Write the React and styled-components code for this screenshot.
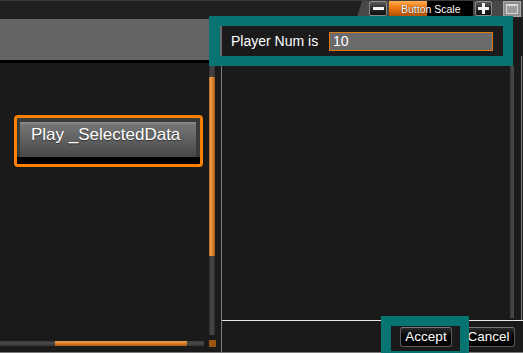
import React from 'react';
import styled, { createGlobalStyle } from 'styled-components';

const Global = createGlobalStyle`
  html, body { margin: 0; padding: 0; background: #1a1a1a; }
  body { font-family: "Liberation Sans", Arial, sans-serif; }
  * { box-sizing: border-box; }
`;

const TEAL = '#067470';
const ORANGE = '#ff8000';

const Screen = styled.div`
  position: relative;
  width: 523px;
  height: 353px;
  overflow: hidden;
  background: #1a1a1a;
  display: grid;
  grid-template-rows: 19px 1fr;
`;

const TopBar = styled.div`
  background: #202020;
  border-top: 1px solid #3a3a3a;
  display: flex;
  justify-content: flex-end;
  align-items: flex-start;
`;

const Tab = styled.div`
  width: 166px;
  height: 16px;
  background: #484848;
  clip-path: polygon(5px 0, 100% 0, 100% 100%, 0 100%);
  display: flex;
  align-items: flex-start;
  padding-left: 12px;
  gap: 2px;
`;

const IconBtn = styled.div`
  width: ${p => p.$w}px;
  height: 15px;
  border: 1px solid #8a8a8a;
  border-radius: 2px;
  background: linear-gradient(180deg, #5a5a5a 0%, #2a2a2a 50%, #0e0e0e 100%);
  display: flex;
  align-items: center;
  justify-content: center;
  position: relative;
`;

const Bar = styled.div`
  width: 11px;
  height: 3px;
  background: #f4f4f4;
`;

const PlusV = styled.div`
  position: absolute;
  width: 3px;
  height: 11px;
  background: #f4f4f4;
`;

const ScaleField = styled.div`
  width: 84px;
  height: 15px;
  background:
    linear-gradient(180deg, #ffae55 0%, #f07810 45%, #b05000 100%) 0 0 / 38px 100% no-repeat,
    #000;
  color: #fff;
  font-size: 10.5px;
  line-height: 16px;
  padding-left: 12px;
  white-space: nowrap;
  text-shadow: 0 0 1px #000;
`;

const WinBtn = styled.div`
  margin-left: 9px;
  width: 18px;
  height: 16px;
  background: #8e8e8e;
  border: 1px solid #a8a8a8;
  display: flex;
  align-items: center;
  justify-content: center;
`;

const WinGlyph = styled.div`
  width: 12px;
  height: 10px;
  border: 1px solid #d6d6d6;
  border-top-width: 2px;
  background: #9c9c9c;
`;

const Body = styled.div`
  display: grid;
  grid-template-columns: 209px 7px 5px 1fr;
  border-bottom: 1px solid #7a7a7a;
  min-height: 0;
`;

const LeftPane = styled.div`
  display: flex;
  flex-direction: column;
  min-height: 0;
`;

const Header = styled.div`
  height: 44px;
  background: #646464;
  border-bottom: 3px solid #000;
`;

const Canvas = styled.div`
  flex: 1;
  padding: 52px 0 0 14px;
`;

const PlayOuter = styled.div`
  width: 189px;
  height: 52px;
  border: 3px solid ${ORANGE};
  border-radius: 4px;
  background: #3a3a3a;
  padding: 4px 4px 0 3px;
  border-bottom-width: 3px;
  display: flex;
  flex-direction: column;
  box-shadow: inset 0 -7px 0 #000;
`;

const PlayFace = styled.div`
  height: 35px;
  background: linear-gradient(180deg, #8e8e8e 0%, #757575 8%, #636363 45%, #474747 100%);
  color: #fff;
  font-size: 17px;
  line-height: 20px;
  padding: 3px 0 0 11px;
  white-space: nowrap;
  text-shadow: 0 1px 1px rgba(0,0,0,0.5);
`;

const HScroll = styled.div`
  width: 204px;
  height: 5px;
  margin-bottom: 6px;
  padding-left: 55px;
  background: linear-gradient(180deg, #3c3c3c, #484848 50%, #333);
`;

const HThumb = styled.div`
  width: 132px;
  height: 100%;
  background: linear-gradient(180deg, #f0a050 0%, #d87c28 50%, #a85818 100%);
`;

const VCol = styled.div`
  display: flex;
  flex-direction: column;
  padding-top: 47px;
  padding-bottom: 5px;
  gap: 5px;
`;

const VTrack = styled.div`
  flex: 1;
  width: 6px;
  padding-top: 11px;
  background: linear-gradient(90deg, #2e2e2e, #484848 40%, #333 100%);
`;

const VThumb = styled.div`
  height: 179px;
  background: linear-gradient(90deg, #b8621a 0%, #f0a050 30%, #d07a28 70%, #a85818 100%);
`;

const Corner = styled.div`
  width: 7px;
  height: 7px;
  background: #9c5510;
`;

const RightPane = styled.div`
  display: flex;
  flex-direction: column;
  border-left: 1px solid #7c7c7c;
  min-height: 0;
`;

const FormRow = styled.div`
  margin: 7px 0 0 -2px;
  width: 283px;
  height: 30px;
  background: #1b1b1b;
  border-left: 2px solid #6a6a6a;
  display: flex;
  align-items: center;
  padding: 0 10px 0 9px;
  color: #fff;
  font-size: 14px;
`;

const NumInput = styled.div`
  margin-left: auto;
  width: 164px;
  height: 19px;
  background: #6a6a6a;
  border: 1px solid #e07810;
  color: #fff;
  font-size: 14px;
  line-height: 17px;
  padding-left: 3px;
`;

const ListArea = styled.div`
  flex: 1;
  display: flex;
  justify-content: flex-end;
  padding: 10px 0 2px;
  margin-right: 1px;
  border-right: 1px solid #7c7c7c;
`;

const RTrack = styled.div`
  width: 4px;
  margin-right: 7px;
  background: linear-gradient(90deg, #3a3a3a, #4a4a4a);
`;

const Divider = styled.div`
  height: 1px;
  background: #e8e8e8;
`;

const ButtonRow = styled.div`
  height: 31px;
  display: flex;
  justify-content: flex-end;
  align-items: flex-start;
  padding: 6px 8px 0 0;
  gap: 10px;
`;

const DlgButton = styled.div`
  width: ${p => p.$w}px;
  height: 20px;
  background: linear-gradient(180deg, #2a2a2a 0%, #050505 45%, #000 100%);
  border: 1px solid #5a5a5a;
  border-top-color: #7a7a7a;
  border-radius: 3px;
  color: #fff;
  font-size: 13.5px;
  line-height: 18px;
  text-align: center;
  white-space: nowrap;
`;

const Highlight = styled.div`
  position: absolute;
  left: ${p => p.$x}px;
  top: ${p => p.$y}px;
  width: ${p => p.$w}px;
  height: ${p => p.$h}px;
  border-style: solid;
  border-color: ${TEAL};
  border-width: ${p => p.$bw};
  pointer-events: none;
`;

export default function App() {
  return (
    <>
      <Global />
      <Screen>
        <TopBar>
          <Tab>
            <IconBtn $w={18}><Bar /></IconBtn>
            <ScaleField>Button Scale</ScaleField>
            <IconBtn $w={17}><Bar /><PlusV /></IconBtn>
            <WinBtn><WinGlyph /></WinBtn>
          </Tab>
        </TopBar>
        <Body>
          <LeftPane>
            <Header />
            <Canvas>
              <PlayOuter>
                <PlayFace>Play _SelectedData</PlayFace>
              </PlayOuter>
            </Canvas>
            <HScroll><HThumb /></HScroll>
          </LeftPane>
          <VCol>
            <VTrack><VThumb /></VTrack>
            <Corner />
          </VCol>
          <div />
          <RightPane>
            <FormRow>
              Player Num is
              <NumInput>10</NumInput>
            </FormRow>
            <ListArea><RTrack /></ListArea>
            <Divider />
            <ButtonRow>
              <DlgButton $w={52}>Accept</DlgButton>
              <DlgButton $w={53}>Cancel</DlgButton>
            </ButtonRow>
          </RightPane>
        </Body>
        <Highlight $x={209} $y={16} $w={304} $h={50} $bw="10px 10px 10px 11px" />
        <Highlight $x={381} $y={316} $w={88} $h={37} $bw="10px 9px 2px 10px" />
      </Screen>
    </>
  );
}
